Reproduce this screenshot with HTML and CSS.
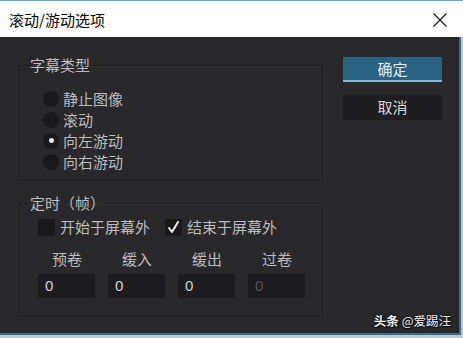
FILE: index.html
```html
<!DOCTYPE html>
<html lang="zh">
<head>
<meta charset="utf-8">
<link rel="stylesheet" href="styles.css">
</head>
<body>
<div class="window">
  <div class="titlebar">
    <span class="title">滚动/游动选项</span>
    <svg class="close" width="14" height="14" viewBox="0 0 14 14"><path d="M0.5 0.5L13.5 13.5M13.5 0.5L0.5 13.5" stroke="#111" stroke-width="1.1" fill="none"/></svg>
  </div>
  <div class="main">
    <div class="leftcol">
      <fieldset class="group group-type">
        <legend class="legend">字幕类型</legend>
        <div class="radios">
          <div class="radio-row"><span class="radio"></span><span class="label">静止图像</span></div>
          <div class="radio-row"><span class="radio"></span><span class="label">滚动</span></div>
          <div class="radio-row"><span class="radio checked"><span class="dot"></span></span><span class="label">向左游动</span></div>
          <div class="radio-row"><span class="radio"></span><span class="label">向右游动</span></div>
        </div>
      </fieldset>
      <fieldset class="group group-timing">
        <legend class="legend">定时（帧）</legend>
        <div class="check-row">
          <div class="check-item"><span class="checkbox"></span><span class="label">开始于屏幕外</span></div>
          <div class="check-item"><span class="checkbox"><svg width="17" height="17" viewBox="0 0 17 17"><path d="M4 9L7 13L13 3" stroke="#f2f2f2" stroke-width="2" fill="none" stroke-linecap="round" stroke-linejoin="round"/></svg></span><span class="label">结束于屏幕外</span></div>
        </div>
        <div class="fields">
          <div class="field"><span class="flabel">预卷</span><span class="input">0</span></div>
          <div class="field"><span class="flabel">缓入</span><span class="input">0</span></div>
          <div class="field"><span class="flabel">缓出</span><span class="input">0</span></div>
          <div class="field"><span class="flabel">过卷</span><span class="input disabled">0</span></div>
        </div>
      </fieldset>
    </div>
    <div class="rightcol">
      <div class="btn btn-ok">确定</div>
      <div class="btn btn-cancel">取消</div>
    </div>
    <div class="watermark"><b>头条</b> @爱踢汪</div>
  </div>
</div>
</body>
</html>
```
FILE: styles.css
```css
* { box-sizing: border-box; }
html, body { margin: 0; padding: 0; }
body {
  width: 463px;
  height: 338px;
  overflow: hidden;
  background: #b9c9d3;
  font-family: "Noto Sans CJK SC", "Microsoft YaHei", sans-serif;
}
.window {
  width: 463px;
  height: 338px;
  display: flex;
  flex-direction: column;
}
.titlebar {
  height: 37px;
  background: #ffffff;
  border-top: 1px solid #6aa0c8;
  display: flex;
  align-items: center;
  justify-content: space-between;
  padding: 0 16px 0 9px;
  flex: none;
}
.title {
  font-size: 15px;
  line-height: 18px;
  color: #000;
  margin-top: 2px;
}
.close { display: block; margin-top: 2px; }
.main {
  position: relative;
  height: 298px;
  width: 461px;
  background: #28272a;
  border-right: 2px solid #386b8c;
  border-bottom: 2px solid #386b8c;
  display: flex;
  flex: none;
}
.leftcol {
  padding: 20px 0 0 19px;
  width: 324px;
  display: flex;
  flex-direction: column;
}
.group {
  margin: 0;
  width: 304px;
  border: 1px solid #1b1a1d;
  box-shadow: inset 1px 1px 0 #302f33, 1px 1px 0 #302f33;
  padding: 0;
  min-width: 0;
}
.legend {
  padding: 0 2px 0 0;
  margin-left: 10px;
  font-size: 15px;
  line-height: 16px;
  color: #bdbdbd;
}
.group-type {
  height: 124px;
  padding-top: 15px;
}
.radios { padding-left: 23px; }
.radio-row {
  height: 21px;
  display: flex;
  align-items: center;
  gap: 4px;
}
.radio {
  width: 16px;
  height: 16px;
  border-radius: 50%;
  background: #19181b;
  display: flex;
  align-items: center;
  justify-content: center;
}
.dot {
  width: 5px;
  height: 5px;
  border-radius: 50%;
  background: #e8e8e8;
}
.label {
  font-size: 15px;
  line-height: 18px;
  color: #bdbdbd;
}
.group-timing {
  margin-top: 14px;
  height: 122px;
  padding-top: 6px;
}
.check-row {
  display: flex;
  height: 20px;
  align-items: center;
  padding-left: 18px;
}
.check-item {
  display: flex;
  align-items: center;
  gap: 5px;
}
.check-item + .check-item { margin-left: 15px; }
.checkbox {
  width: 17px;
  height: 17px;
  background: #19181b;
  display: block;
}
.checkbox svg { display: block; }
.fields {
  display: flex;
  gap: 13px;
  padding-left: 18px;
  margin-top: 14px;
}
.field {
  width: 57px;
  display: flex;
  flex-direction: column;
  align-items: center;
  gap: 7px;
}
.flabel {
  font-size: 15px;
  line-height: 16px;
  color: #bdbdbd;
  padding-left: 1px;
}
.input {
  width: 57px;
  height: 24px;
  background: #1c1b1e;
  color: #d6d6d6;
  font-size: 15px;
  line-height: 24px;
  padding-left: 7px;
  font-family: "Liberation Sans", Arial, sans-serif;
}
.input.disabled { color: #555458; }
.rightcol {
  padding: 20px 0 0 19px;
  display: flex;
  flex-direction: column;
  gap: 13px;
}
.btn {
  width: 99px;
  height: 25px;
  font-size: 15px;
  line-height: 24px;
  text-align: center;
  color: #d8d8d8;
}
.btn-ok {
  background: #2a6282;
  color: #e6eef3;
  border-bottom: 2px solid #8ab7cf;
}
.btn-cancel {
  background: #1d1c1f;
}
.watermark {
  position: absolute;
  right: 8px;
  bottom: 5px;
  font-size: 12.5px;
  line-height: 14px;
  color: #f2f2f2;
  text-shadow: 0 0 2px #000, 1px 1px 1px #000;
}
.watermark b { font-weight: 700; }
```
